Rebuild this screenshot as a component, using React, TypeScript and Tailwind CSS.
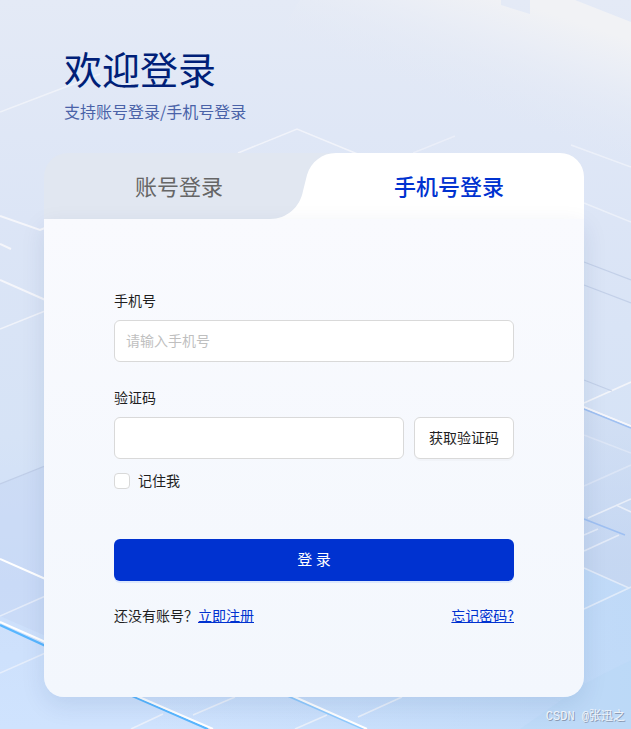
import React, { useState } from 'react'

type TabKey = 'account' | 'phone'

const Backdrop: React.FC = () => (
  <svg
    aria-hidden="true"
    viewBox="0 0 631 729"
    preserveAspectRatio="xMidYMid slice"
    className="absolute inset-0 h-full w-full"
  >
    <defs>
      <linearGradient id="sky" x1="0" y1="0" x2="0" y2="1">
        <stop offset="0" stopColor="#e4eaf6" />
        <stop offset="0.3" stopColor="#dce5f6" />
        <stop offset="0.6" stopColor="#d6e3f6" />
        <stop offset="0.8" stopColor="#cddffa" />
        <stop offset="1" stopColor="#cfe3fe" />
      </linearGradient>
      <linearGradient id="warm" gradientUnits="userSpaceOnUse" x1="572" y1="20" x2="535" y2="130">
        <stop offset="0" stopColor="#f1f2f5" />
        <stop offset="0.3" stopColor="#eceff6" stopOpacity="0.8" />
        <stop offset="1" stopColor="#e2e8f5" stopOpacity="0" />
      </linearGradient>
      <linearGradient id="rightSide" gradientUnits="userSpaceOnUse" x1="560" y1="400" x2="560" y2="560">
        <stop offset="0" stopColor="#c8d7f0" stopOpacity="0.3" />
        <stop offset="1" stopColor="#c3d5f0" stopOpacity="0.8" />
      </linearGradient>
      <linearGradient id="floor" x1="0" y1="0" x2="1" y2="0">
        <stop offset="0.1" stopColor="#bcd8f7" stopOpacity="0" />
        <stop offset="1" stopColor="#bcd8f7" />
      </linearGradient>
    </defs>
    <rect width="631" height="729" fill="url(#sky)" />
    <path d="M300 0H501V5L530 14V0H575L631 22V160H200Z" fill="url(#warm)" />
    <path d="M0 484L44 466L120 434V668L0 616Z" fill="#c5d6f3" opacity="0.5" />
    <path d="M300 300L584 407L631 426V590L584 568L300 440Z" fill="url(#rightSide)" />
    <path d="M100 500L584 568L629 588L631 587V729H100Z" fill="url(#floor)" opacity="0.8" />
    <path d="M520 729L584 684L631 660V729Z" fill="#b7d7f6" opacity="0.4" />

    <g fill="none" stroke="#f5f6fb" strokeWidth="1.6">
      <path d="M0 112L63 88L100 74" opacity="0.7" />
      <path d="M0 216L40 230L50 226" strokeWidth="2" />
      <path d="M0 244L11 249" strokeWidth="2" />
      <path d="M238 153L297 129L360 155" opacity="0.8" />
      <path d="M413 153L455 136" opacity="0.5" />
      <path d="M571 145L631 167M584 203L631 222" opacity="0.6" />
      <path d="M0 280L50 302" strokeWidth="2" />
      <path d="M0 329L50 309" opacity="0.8" />
      <path d="M0 559L50 581" stroke="#ffffff" strokeWidth="2" />
      <path d="M0 616L50 594M0 673L50 651" opacity="0.6" />
      <path d="M584 403L631 382M584 407L631 426" opacity="0.9" />
      <path d="M584 435L631 453M584 486L631 465" opacity="0.35" />
      <path d="M588 518L631 499M616 505L631 512" opacity="0.7" />
      <path d="M584 535L598 529M584 551L619 535" opacity="0.6" />
      <path d="M584 568L629 588L584 609M629 588L631 587" opacity="0.6" />
      <path d="M235 697L193 715M163 714L131 729M402 697L358 717M327 715L295 729" opacity="0.7" />
    </g>
    <g fill="none" stroke="#b9c7e2" strokeWidth="1.2">
      <path d="M0 484L50 464" opacity="0.7" />
      <path d="M584 262L631 280M584 285L631 303M584 380L612 391" opacity="0.7" />
    </g>
    <g fill="none" stroke="#58b6ff" strokeWidth="2.4">
      <path d="M0 625L50 648M130 695L208 729" />
      <path d="M286 695L364 729" opacity="0.5" />
    </g>
    <path d="M0 622L50 644M132 694L213 729M288 694L367 729" stroke="#ffffff" strokeWidth="2" />
    <path d="M584 409L631 428M584 519L625 535" stroke="#9fc0f2" strokeWidth="1.6" />
    <path d="M584 407L631 426" stroke="#f5f6fb" strokeWidth="1.6" />
  </svg>
)

const TabShape: React.FC<{ active: TabKey }> = ({ active }) => (
  <svg
    aria-hidden="true"
    viewBox="0 0 540 66"
    preserveAspectRatio="none"
    className={`absolute inset-0 h-full w-full ${active === 'account' ? '-scale-x-100' : ''}`}
  >
    <rect width="540" height="66" fill="#e1e7f1" />
    <path d="M226 66C243 66 256 54 259 38L263 22C267 9 278 0 292 0H540V66Z" fill="#ffffff" />
  </svg>
)

const tabs: { key: TabKey; label: string }[] = [
  { key: 'account', label: '账号登录' },
  { key: 'phone', label: '手机号登录' },
]

const inputClass =
  'h-[42px] w-full min-w-0 rounded-md border border-[#d9d9d9] bg-white px-[11px] pb-0.5 text-sm outline-none placeholder:text-[#bfbfbf] focus:border-[#0032d0]'

const App: React.FC = () => {
  const [active, setActive] = useState<TabKey>('phone')

  return (
    <div className="relative min-h-screen px-11 pt-[38px] pb-8 font-['Noto_Sans_CJK_SC',sans-serif] text-sm leading-[22px] text-[#1f1f1f]">
      <Backdrop />

      <main className="relative w-full max-w-[540px]">
        <header className="px-5 pb-[29px]">
          <h1 className="text-[38px] leading-[60px] text-[#001f78]">欢迎登录</h1>
          <p className="text-base leading-[26px] text-[#4a62a8]">支持账号登录/手机号登录</p>
        </header>

        <div className="relative flex h-[66px] overflow-hidden rounded-t-3xl" role="tablist">
          <TabShape active={active} />
          {tabs.map(tab => (
            <button
              key={tab.key}
              type="button"
              role="tab"
              aria-selected={active === tab.key}
              onClick={() => setActive(tab.key)}
              className={`relative flex-1 pb-0.5 text-[22px] ${active === tab.key ? 'font-medium text-[#0032d0]' : 'text-[#666666]'}`}
            >
              {tab.label}
            </button>
          ))}
        </div>

        <form
          onSubmit={e => e.preventDefault()}
          className="relative rounded-b-[20px] bg-linear-to-b from-[#f9fafe] to-[#f3f7fd] px-[70px] pt-[70px] pb-[71px] shadow-[0_8px_24px_rgba(0,50,110,0.1)]"
        >
          <label htmlFor="phone" className="mb-[9px] block">手机号</label>
          <input id="phone" type="tel" placeholder="请输入手机号" className={inputClass} />

          <label htmlFor="code" className="mt-6 mb-[9px] block">验证码</label>
          <div className="flex gap-[10px]">
            <input id="code" type="text" className={inputClass} />
            <button
              type="button"
              className="h-[42px] w-[100px] shrink-0 rounded-md border border-[#d9d9d9] bg-white pb-0.5 shadow-[0_2px_0_rgba(0,0,0,0.02)]"
            >
              获取验证码
            </button>
          </div>

          <label className="mt-[11px] flex items-center gap-2">
            <input
              type="checkbox"
              className="size-4 appearance-none rounded-sm border border-[#d9d9d9] bg-white checked:border-[#0032d0] checked:bg-[#0032d0]"
            />
            <span className="pb-0.5 leading-5">记住我</span>
          </label>

          <button
            type="submit"
            className="mt-[47px] h-[42px] w-full rounded-md bg-[#0032d0] pb-0.5 text-[15px] text-white shadow-[0_2px_0_rgba(5,95,255,0.1)]"
          >
            登 录
          </button>

          <div className="mt-[23px] flex justify-between">
            <p>
              还没有账号？<a href="#register" className="text-[#0032d0] underline">立即注册</a>
            </p>
            <a href="#forgot" className="text-[#0032d0] underline">忘记密码?</a>
          </div>
        </form>
      </main>

      <span className="absolute right-1.5 bottom-1 font-['Liberation_Mono','Noto_Sans_CJK_SC',monospace] text-xs leading-4 text-[#eef3fa] [text-shadow:1px_1px_0_#8c9bb3]">
        CSDN @张迅之
      </span>
    </div>
  )
}

export default App
